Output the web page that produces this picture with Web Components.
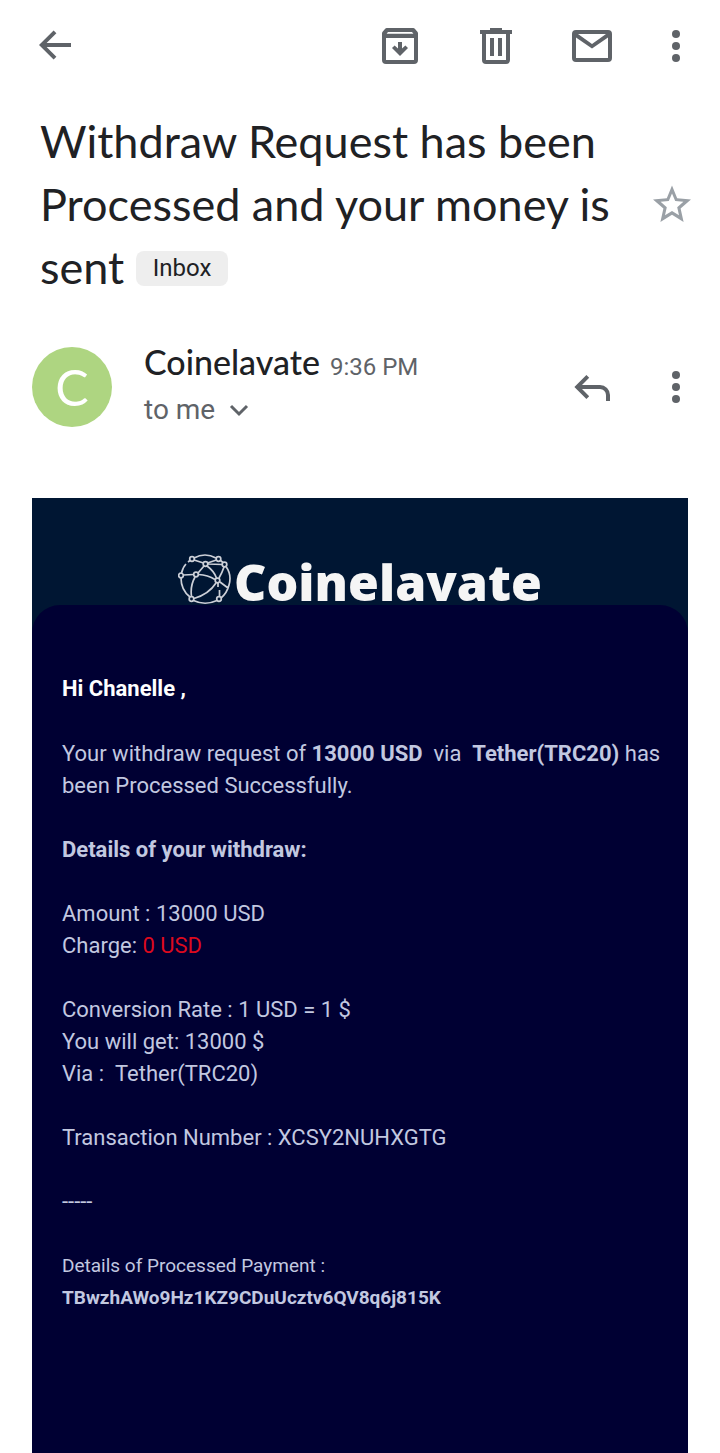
<!DOCTYPE html>
<html lang="en">
<head>
<meta charset="utf-8">
<meta name="viewport" content="width=device-width, initial-scale=1">
<title>Withdraw Request has been Processed and your money is sent</title>
<style>
  html { background: #fff; }
  body { margin: 0; font-family: Roboto, "Liberation Sans", sans-serif; color: #202124; }
</style>
</head>
<body>
<mail-app></mail-app>

<template id="icon-button-tpl">
  <style>
    :host { display: block; flex: none; }
    button { display: flex; align-items: center; justify-content: center; width: 48px; height: 48px; padding: 0; border: 0; background: none; color: #5f6368; cursor: pointer; }
    ::slotted(svg) { display: block; width: 48px; height: 48px; fill: currentColor; }
  </style>
  <button type="button"><slot></slot></button>
</template>

<template id="mail-toolbar-tpl">
  <style>
    :host { display: flex; align-items: center; padding: 22px 20px 22px 32px; }
    .actions { display: flex; align-items: center; gap: 48px; margin-left: auto; }
    .more { margin-left: -12px; }
  </style>
  <icon-button label="Back"><svg viewBox="0 0 24 24"><path d="M19.5 10.5H7.3l4.9-4.9-1.4-1.4-7.3 7.3 7.3 7.3 1.4-1.4-4.9-4.9h12.2z"/></svg></icon-button>
  <div class="actions">
    <icon-button label="Archive"><svg viewBox="0 0 24 24"><path fill-rule="evenodd" d="M5.400 3h13.200q.5 0 .8.4l1.300 1.500q.3.4.3.9V19a2 2 0 0 1-2 2H5a2 2 0 0 1-2-2V5.800q0-.5.3-.9l1.300-1.500q.3-.4.8-.4zM6 5l-.7.900h13.400L18 5zM5 8v11h14V8zM11 10h2v3.200l1.700-1.500 1.300 1.300L12 17 8 13l1.300-1.300 1.700 1.500z"/></svg></icon-button>
    <icon-button label="Delete"><svg viewBox="0 0 24 24"><path fill-rule="evenodd" d="M15 4V3H9v1H4v2h1v13a2 2 0 0 0 2 2h10a2 2 0 0 0 2-2V6h1V4zM7 6h10v13H7zM9 8h2v9H9zM13 8h2v9h-2z"/></svg></icon-button>
    <icon-button label="Mark as unread"><svg viewBox="0 0 24 24"><path fill-rule="evenodd" d="M20 4H4a2 2 0 0 0-2 2v12a2 2 0 0 0 2 2h16a2 2 0 0 0 2-2V6a2 2 0 0 0-2-2zM19 6 12 11 5 6zM4 18V7.700L12 13.300l8-5.600V18z"/></svg></icon-button>
    <icon-button class="more" label="More options"><svg viewBox="0 0 24 24"><circle cx="12" cy="6" r="2"/><circle cx="12" cy="12" r="2"/><circle cx="12" cy="18" r="2"/></svg></icon-button>
  </div>
</template>

<template id="mail-subject-tpl">
  <style>
    :host { display: flex; align-items: center; gap: 8px; padding: 18px 24px 0 40px; }
    h1 { flex: 1; margin: 0; font: 400 45px/63px Lato, "Open Sans", sans-serif; }
    .label { display: inline-block; vertical-align: 8px; padding: 0 17px; border-radius: 8px; background: #eee; font: 24px/35px Roboto, sans-serif; color: #202124; }
    icon-button svg { fill: #9aa0a6; }
  </style>
  <h1><slot></slot> <span class="label"><slot name="label"></slot></span></h1>
  <icon-button label="Star"><svg viewBox="0 0 24 24"><path fill-rule="evenodd" d="m21.500 9.200-6.900-.6L12 2.200 9.400 8.600l-6.900.6 5.200 4.500-1.500 6.800L12 16.900l5.800 3.600-1.500-6.800zM12 15l-3.500 2.100.9-4-3.100-2.700 4.100-.4L12 6.300l1.600 3.700 4.100.4-3.100 2.700.9 4z"/></svg></icon-button>
</template>

<template id="mail-sender-tpl">
  <style>
    :host { display: flex; align-items: center; gap: 32px; padding: 42px 20px 0 32px; }
    .avatar { flex: none; width: 80px; height: 80px; border-radius: 50%; background: #aed581; color: #fff; font: 50px/80px Lato, sans-serif; text-align: center; }
    .who { flex: 1; }
    .name { display: flex; align-items: baseline; gap: 10px; margin-bottom: 4px; font-size: 24px; line-height: 24px; color: #5f6368; }
    .name strong { font: 500 34px/42px Lato, sans-serif; color: #202124; }
    button { display: flex; align-items: center; gap: 14px; padding: 0; border: 0; background: none; font: 28px/46px Roboto, sans-serif; color: #5f6368; }
    button svg { width: 20px; height: 20px; fill: none; stroke: currentColor; stroke-width: 3; }
    .actions { display: flex; gap: 36px; }
  </style>
  <div class="avatar" aria-hidden="true">C</div>
  <div class="who">
    <div class="name"><strong><slot name="name"></slot></strong><slot name="time"></slot></div>
    <button type="button"><span><slot name="to"></slot></span><svg viewBox="0 0 20 20"><path d="m2 6 8 8 8-8"/></svg></button>
  </div>
  <div class="actions">
    <icon-button label="Reply"><svg viewBox="0 0 24 24"><path d="M7 11h9a5 5 0 0 1 5 5v3h-2v-3a3 3 0 0 0-3-3H7l3.600 3.600L9.200 18l-6-6 6-6 1.400 1.400z"/></svg></icon-button>
    <icon-button label="More options"><svg viewBox="0 0 24 24"><circle cx="12" cy="6" r="2"/><circle cx="12" cy="12" r="2"/><circle cx="12" cy="18" r="2"/></svg></icon-button>
  </div>
</template>

<template id="brand-banner-tpl">
  <style>
    :host { display: flex; justify-content: center; align-items: flex-end; gap: 2px; padding: 53px 32px 0; color: #f5f5f5; font: 800 50px/46px "Open Sans", sans-serif; }
    svg { flex: none; width: 54px; height: 54px; fill: none; stroke: #ccd0d8; stroke-width: 1.700; }
  </style>
  <svg viewBox="0 0 54 54" aria-hidden="true">
    <path d="M16 7Q27 1 38 7M42.500 9.500 45 11.500M48 15.500Q54 24 51 34 49 42 43 47M39 49.500Q27 55 15.500 49.500M12 46Q3 39 3 27M3.500 22Q5 16 8 13M10 11 12 9.500M16 9 25.500 12M38.500 9 29.500 12M30 13 44 13.500M5.500 24 15.500 23.500M20 22 26 15M29 15Q36 20 38.500 27M20.500 23.500Q30 24 37 28.500M17 26Q12 35 13.500 45.500M38 32Q31 43 16 47.500M46 16Q44 22 41 27M42 31 50 37M40 32V36M41.500 39V45.500"/>
    <g><circle cx="14" cy="8" r="2.300"/><circle cx="40.500" cy="8" r="2.300"/><circle cx="46.500" cy="13.500" r="2.300"/><circle cx="27.500" cy="13" r="2.300"/><circle cx="3" cy="24.500" r="2.300"/><circle cx="18" cy="23.500" r="2.300"/><circle cx="39.500" cy="29.500" r="2.300"/><circle cx="13.500" cy="48" r="2.300"/><circle cx="41" cy="48" r="2.300"/></g>
  </svg>
  <span><slot></slot></span>
</template>

<template id="mail-body-tpl">
  <style>
    :host { display: flex; flex-direction: column; flex: 1; margin: 65px 32px 0; background: #001633; }
    article { flex: 1; padding: 68px 20px 110px 30px; border-radius: 28px 28px 0 0; background: #000033; color: #c2c8e0; font-size: 22px; line-height: 32px; }
    p { margin: 0 0 32px; }
    .hi { color: #fff; font-weight: 700; margin-bottom: 33px; }
    .charge { color: #dc0a1e; }
    .small { margin: 0; font-size: 19px; }
  </style>
  <brand-banner>Coinelavate</brand-banner>
  <article>
    <p class="hi">Hi Chanelle ,</p>
    <p>Your withdraw request of <b>13000 USD</b> &nbsp;via &nbsp;<b>Tether(TRC20)</b> has been Processed Successfully.</p>
    <p><b>Details of your withdraw:</b></p>
    <p>Amount : 13000 USD<br>Charge: <span class="charge">0 USD</span></p>
    <p>Conversion Rate : 1 USD = 1 $<br>You will get: 13000 $<br>Via : &nbsp;Tether(TRC20)</p>
    <p>Transaction Number : XCSY2NUHXGTG</p>
    <p>-----</p>
    <p class="small">Details of Processed Payment :<br><b>TBwzhAWo9Hz1KZ9CDuUcztv6QV8q6j815K</b></p>
  </article>
</template>

<template id="mail-app-tpl">
  <style>
    :host { display: flex; flex-direction: column; min-height: 100vh; }
  </style>
  <mail-toolbar></mail-toolbar>
  <mail-subject>Withdraw Request has been Processed and your money is sent<span slot="label">Inbox</span></mail-subject>
  <mail-sender><span slot="name">Coinelavate</span><span slot="time">9:36 PM</span><span slot="to">to me</span></mail-sender>
  <mail-body></mail-body>
</template>

<script>
  class TemplateElement extends HTMLElement {
    constructor() {
      super();
      const tpl = document.getElementById(this.localName + '-tpl');
      this.attachShadow({ mode: 'open' }).append(document.importNode(tpl.content, true));
    }
  }
  class IconButton extends TemplateElement {
    connectedCallback() {
      this.shadowRoot.querySelector('button').setAttribute('aria-label', this.getAttribute('label'));
    }
  }
  customElements.define('icon-button', IconButton);
  customElements.define('mail-toolbar', class extends TemplateElement {});
  customElements.define('mail-subject', class extends TemplateElement {});
  customElements.define('mail-sender', class extends TemplateElement {});
  customElements.define('brand-banner', class extends TemplateElement {});
  customElements.define('mail-body', class extends TemplateElement {});
  customElements.define('mail-app', class extends TemplateElement {});
</script>
</body>
</html>
